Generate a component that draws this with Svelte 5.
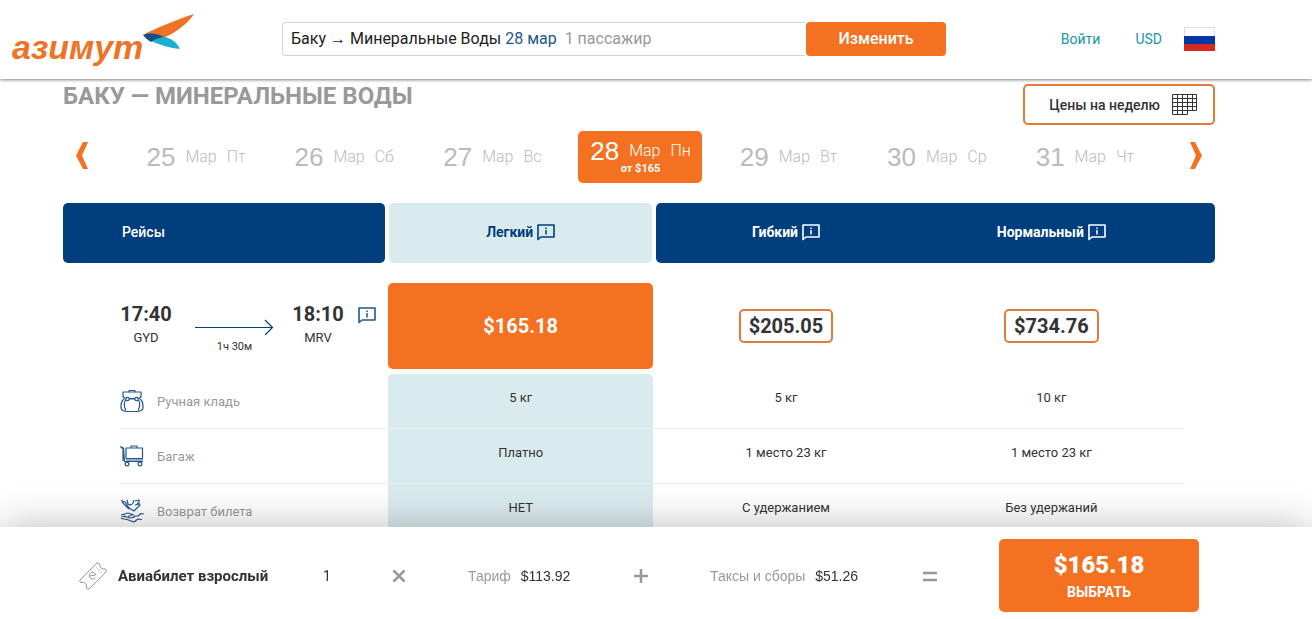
<script lang="ts">
	const days = [
		{ day: 25, week: 'Пт' },
		{ day: 26, week: 'Сб' },
		{ day: 27, week: 'Вс' },
		{ day: 28, week: 'Пн', price: '$165' },
		{ day: 29, week: 'Вт' },
		{ day: 30, week: 'Ср' },
		{ day: 31, week: 'Чт' }
	];

	const services = [
		{ icon: 'bag', name: 'Ручная кладь', values: ['5 кг', '5 кг', '10 кг'] },
		{ icon: 'cart', name: 'Багаж', values: ['Платно', '1 место 23 кг', '1 место 23 кг'] },
		{ icon: 'refund', name: 'Возврат билета', values: ['НЕТ', 'С удержанием', 'Без удержаний'] }
	];
</script>

{#snippet info()}
	<svg class="info" width="18" height="17" viewBox="0 0 18 17" fill="none" stroke="currentColor">
		<path d="M1 15.5V1H17V13H4Z" stroke-width="1.6" stroke-linejoin="round" />
		<path d="M9 3.500V5M9 6V10.500" stroke-width="1.500" />
	</svg>
{/snippet}

<header>
	<a class="logo" href="/" aria-label="азимут">
		<svg width="182" height="54" viewBox="0 0 182 54">
			<text x="0" y="47">азимут</text>
			<path d="M131 23C142 17 166 7 182 2C175 12 165 20 151 26C145 23 138 21 131 23Z" fill="#ee7326" />
			<path d="M139 29C144 26 148 25 152 25C160 26 165 31 168 37C158 36 148 33 139 29Z" fill="#1ab0cf" />
			<path d="M131 23C138 20 146 22 152 25C147 26 143 27 139 30C136 28 133 26 131 23Z" fill="#14508c" />
		</svg>
	</a>
	<div class="search">
		<button class="route">
			Баку <span class="to">→</span> Минеральные Воды <span class="date">28 мар</span>
			<span class="people">1 пассажир</span>
		</button>
		<button class="change">Изменить</button>
	</div>
	<nav>
		<a href="/login">Войти</a>
		<a href="/currency">USD</a>
		<a class="flag" href="/ru" aria-label="Русский">
			<svg width="31" height="24" viewBox="0 0 31 24">
				<path d="M0 0H31V24H0Z" fill="#ddd" />
				<path d="M1 1H30V9H1Z" fill="#fff" />
				<path d="M0 9H31V17H0Z" fill="#0038a8" />
				<path d="M0 17H31V24H0Z" fill="#d32a20" />
			</svg>
		</a>
	</nav>
</header>

<main>
	<div class="title">
		<h1>Баку — Минеральные Воды</h1>
		<button class="week">
			Цены на неделю
			<svg width="25" height="21" viewBox="0 0 25 21" fill="none" stroke="#333">
				<path d="M.5 .5H24.500V16.500H15.500V20.500H.5ZM.5 4.500H24.500M.5 8.500H24.500M.5 12.500H24.500M.5 16.500H15.500M5.500 .5V20.500M10.500 .5V20.500M15.500 .5V16.500M20.500 .5V16.500" />
			</svg>
		</button>
	</div>

	<div class="days">
		<button class="arrow" aria-label="Назад">
			<svg width="12" height="27" viewBox="0 0 12 27"><path d="M7 0H12L6 13.500L12 27H7L0 13.500Z" /></svg>
		</button>
		{#each days as d}
			<button class="day" class:active={d.price}>
				<span class="line"><b>{d.day}</b><span>Мар</span><span>{d.week}</span></span>
				{#if d.price}
					<small>от {d.price}</small>
				{/if}
			</button>
		{/each}
		<button class="arrow next" aria-label="Вперед">
			<svg width="12" height="27" viewBox="0 0 12 27"><path d="M5 0H0L6 13.500L0 27H5L12 13.500Z" /></svg>
		</button>
	</div>

	<table>
		<colgroup>
			<col class="flights" />
			<col />
			<col />
			<col />
			<col class="rest" />
		</colgroup>
		<thead>
			<tr>
				<th class="first"><div>Рейсы</div></th>
				<th class="light"><div>Легкий {@render info()}</div></th>
				<th class="flex"><div>Гибкий {@render info()}</div></th>
				<th class="normal" colspan="2"><div>Нормальный {@render info()}</div></th>
			</tr>
		</thead>
		<tbody>
			<tr class="flight">
				<td>
					<div class="times">
						<div class="point"><strong>17:40</strong><span>GYD</span></div>
						<div class="duration">
							<svg width="79" height="16" viewBox="0 0 79 16" fill="none" stroke="#003e7e" stroke-width="1.200">
								<path d="M0 8.500H77M70 1L77.500 8.500L70 16" />
							</svg>
							<span>1ч 30м</span>
						</div>
						<div class="point"><strong>18:10</strong><span>MRV</span></div>
						<button class="details" aria-label="О рейсе">{@render info()}</button>
					</div>
				</td>
				<td><button class="fare selected">$165.18</button></td>
				<td><button class="fare">$205.05</button></td>
				<td><button class="fare">$734.76</button></td>
				<td></td>
			</tr>
			<tr class="space"><td colspan="5"></td></tr>
			{#each services as s}
				<tr class="service">
					<th>
						<div>
							<svg width="24" height="24" viewBox="0 0 24 24" fill="none" stroke="#24578c" stroke-width="1.200" stroke-linejoin="round">
								{#if s.icon === 'bag'}
									<path d="M9 3V1.500H15V3M3 3H21V7.500L19 9.500H5L3 7.500ZM5.500 11C3.500 15 4.500 19 6 21.500M18.500 11C20.500 15 19.500 19 18 21.500M4 10C1 12 1 15 1 19C1 21 4 22.500 7 22.500H17C20 22.500 23 21 23 19C23 15 23 12 20 10M9 10H15" />
									<circle cx="7.500" cy="10" r="1.700" fill="#fff" />
									<circle cx="16.500" cy="10" r="1.700" fill="#fff" />
								{:else if s.icon === 'cart'}
									<path d="M0 2.500L3.500 4L4.500 17.500H23M1 4H3V17M6 4H22.500V14.500H6ZM11 4V2H17V4M6 16H23" />
									<circle cx="7" cy="20" r="1.900" />
									<circle cx="20" cy="20" r="1.900" />
								{:else}
									<path d="M1 1.500L5 3L9 9L14 12L20 6L17 4M7 1L8 5Q11 7 13 4L14 1M15 2L19 1V5L15 6M2 3L9 10M1 16L8 14L13 15.500L8 17.500M13 17L18 17L21 14.500L24 15M1 18L6 17M1 19.500L7 20.500L14 23L18 20L22 20.500M3 17L10 19L15 18" />
								{/if}
							</svg>
							{s.name}
						</div>
					</th>
					{#each s.values as value}
						<td>{value}</td>
					{/each}
					<td></td>
				</tr>
			{/each}
		</tbody>
	</table>
</main>

<footer>
	<div class="passenger">
		<svg width="28" height="28" viewBox="0 0 28 28" fill="none" stroke="#999">
			<path d="M18 1Q19.500 0 20.500 2Q21 5 22 6Q24 7.500 26 7Q28 8 27 10L10 27Q8.500 28 7.500 26Q8 23 6.500 21.500Q5 20 2 20.500Q0 20 1 18Z" />
			<path d="M17.500 5.500L18.500 6.500M19.500 8L20.500 9M21.500 10L22.500 11M10.500 14L16.500 13C16 9.500 12 9.500 10.500 12.500C9.500 16 13 18.500 16.500 16" />
		</svg>
		<strong>Авиабилет взрослый</strong>
	</div>
	<span>1</span>
	<svg class="sign" width="14" height="14" viewBox="0 0 14 14"><path d="M1.500 1.500L12.500 12.500M12.500 1.500L1.500 12.500" /></svg>
	<div class="sum"><span>Тариф</span> $113.92</div>
	<svg class="sign" width="14" height="14" viewBox="0 0 14 14"><path d="M7 0V14M0 7H14" /></svg>
	<div class="sum"><span>Таксы и сборы</span> $51.26</div>
	<svg class="sign" width="16" height="14" viewBox="0 0 16 14"><path d="M1 4H15M1 11H15" /></svg>
	<button class="select">
		<strong>$165.18</strong>
		<span>Выбрать</span>
	</button>
</footer>

<style>
	:global(body) {
		background: #fff;
		color: #333;
		font-family: Roboto, 'Liberation Sans', sans-serif;
	}
	button {
		margin: 0;
		padding: 0;
		border: 0;
		background: none;
		color: inherit;
		font: inherit;
		cursor: pointer;
	}
	a {
		color: #1597a5;
		text-decoration: none;
	}
	svg {
		flex: none;
	}

	header {
		position: sticky;
		top: 0;
		z-index: 1;
		display: flex;
		align-items: center;
		box-sizing: border-box;
		height: 79px;
		padding: 0 97px 2px 12px;
		background: #fff;
		box-shadow: 0 1px 3px rgba(0, 0, 0, .5);
	}
	.logo svg {
		display: block;
	}
	.logo text {
		fill: #ee7326;
		font: italic bold 34px 'Liberation Sans', sans-serif;
	}
	.search {
		display: flex;
		flex: 0 1 664px;
		height: 34px;
		margin-left: 88px;
	}
	.route {
		flex: 1;
		padding: 0 8px;
		border: 1px solid #d5d5d5;
		border-right: 0;
		border-radius: 4px 0 0 4px;
		color: #222;
		font-size: 16px;
		text-align: left;
		white-space: nowrap;
	}
	.to {
		font-family: 'Liberation Sans', sans-serif;
	}
	.date {
		color: #24578c;
	}
	.people {
		margin-left: 4px;
		color: #999;
	}
	.change {
		width: 140px;
		border-radius: 4px;
		background: #f37121;
		color: #fff;
		font-size: 16px;
		font-weight: 500;
	}
	nav {
		display: flex;
		align-items: center;
		margin-left: auto;
		font-size: 14px;
	}
	nav a + a {
		margin-left: 35px;
	}
	nav .flag {
		margin-left: 22px;
	}
	.flag svg {
		display: block;
	}

	main {
		padding: 5px 97px 0 63px;
	}
	.title {
		display: flex;
		justify-content: space-between;
	}
	h1 {
		margin: 0;
		color: #999;
		font-size: 24px;
		line-height: 24px;
		text-transform: uppercase;
	}
	.week {
		display: flex;
		align-items: center;
		gap: 12px;
		height: 41px;
		padding: 0 16px 0 24px;
		border: 2px solid #e07b39;
		border-radius: 5px;
		font-size: 14px;
		font-weight: 500;
	}

	.days {
		display: grid;
		grid-template-columns: 59px repeat(7, 1fr) 56px;
		align-items: center;
		height: 52px;
		margin: 6px 0 20px;
	}
	.arrow {
		padding-left: 13px;
		text-align: left;
	}
	.arrow.next {
		padding: 0 13px 0 0;
		text-align: right;
	}
	.arrow path {
		fill: #f37121;
	}
	.arrow svg {
		display: inline-block;
	}
	.day {
		justify-self: center;
		color: #bbb;
		font-size: 16px;
		font-weight: 300;
	}
	.line {
		display: flex;
		align-items: center;
		justify-content: center;
		gap: 10px;
		line-height: 24px;
	}
	.line b {
		font: 26px/24px 'Liberation Sans', sans-serif;
	}
	.active {
		width: 124px;
		height: 52px;
		border-radius: 5px;
		background: #f37121;
		color: #fff;
	}
	small {
		display: block;
		font-size: 11px;
		font-weight: 700;
		line-height: 12px;
	}

	table {
		width: 100%;
		border-spacing: 0;
		table-layout: fixed;
	}
	.flights {
		width: 325px;
	}
	.rest {
		width: 31px;
	}
	th,
	td {
		padding: 0;
		text-align: center;
	}
	thead div {
		display: flex;
		align-items: center;
		justify-content: center;
		gap: 4px;
		box-sizing: border-box;
		height: 60px;
		padding-bottom: 2px;
		background: #003e7e;
		color: #fff;
		font-size: 14px;
	}
	.first div {
		justify-content: flex-start;
		margin-right: 3px;
		padding-left: 59px;
		border-radius: 5px;
		font-weight: 500;
	}
	.light div {
		margin: 0 1px;
		border-radius: 5px;
		background: #daebee;
		color: #003e7e;
	}
	.flex div {
		margin-left: 3px;
		padding-right: 3px;
		border-radius: 5px 0 0 5px;
	}
	.normal div {
		padding-right: 31px;
		border-radius: 0 5px 5px 0;
	}
	.flight td {
		height: 86px;
		padding-top: 20px;
	}
	.times {
		display: flex;
		align-items: flex-start;
		height: 48px;
		padding-left: 57px;
	}
	.point {
		display: flex;
		flex-direction: column;
		align-items: center;
		width: 52px;
		font-size: 13px;
		line-height: 24px;
	}
	.point strong {
		font-size: 20px;
	}
	.duration {
		display: flex;
		flex-direction: column;
		gap: 5px;
		width: 79px;
		margin: 17px 18px 0 23px;
		font-size: 11px;
		line-height: 14px;
	}
	.details {
		margin: 5px 0 0 14px;
		color: #24578c;
	}
	.details svg {
		display: block;
	}
	.fare {
		height: 34px;
		padding: 0 8px;
		border: 2px solid #e07b39;
		border-radius: 5px;
		font-size: 20px;
		font-weight: 700;
	}
	.selected {
		display: block;
		width: 100%;
		height: 86px;
		border: 0;
		background: #f37121;
		color: #fff;
	}
	.space td {
		height: 5px;
	}
	.service th {
		padding-left: 57px;
		color: #999;
		font-size: 13px;
		font-weight: 400;
	}
	.service th div {
		display: flex;
		align-items: center;
		gap: 13px;
		height: 54px;
		border-bottom: 1px solid #e8ecee;
	}
	.service td {
		box-sizing: border-box;
		height: 55px;
		padding-bottom: 8px;
		border-bottom: 1px solid #e8ecee;
		font-size: 13px;
	}
	.service td:nth-child(2) {
		background: #daebee;
	}
	.space + .service td:nth-child(2) {
		border-radius: 5px 5px 0 0;
	}
	.service td:last-child {
		border: 0;
	}

	footer {
		position: fixed;
		right: 0;
		bottom: 0;
		left: 0;
		z-index: 1;
		display: grid;
		grid-template-columns: 244fr 69fr 76fr 166fr 76fr 212fr 77fr 200px;
		align-items: center;
		box-sizing: border-box;
		height: 92px;
		padding: 5px 113px 0 79px;
		background: #fff;
		box-shadow: 0 0 40px rgba(0, 0, 0, .27);
		font-size: 14px;
	}
	.passenger {
		display: flex;
		align-items: center;
		gap: 11px;
	}
	.passenger strong {
		font-size: 15px;
	}
	.sum {
		font-family: 'Liberation Sans', sans-serif;
	}
	.sum span {
		margin-right: 6px;
		color: #999;
	}
	.sign {
		fill: none;
		stroke: #999;
		stroke-width: 2.5;
	}
	.select {
		display: flex;
		flex-direction: column;
		align-items: center;
		justify-content: center;
		height: 73px;
		border-radius: 5px;
		background: #f37121;
		color: #fff;
		font-weight: 700;
		text-transform: uppercase;
	}
	.select strong {
		font-size: 24px;
		line-height: 32px;
	}
	.select span {
		line-height: 22px;
	}
</style>
